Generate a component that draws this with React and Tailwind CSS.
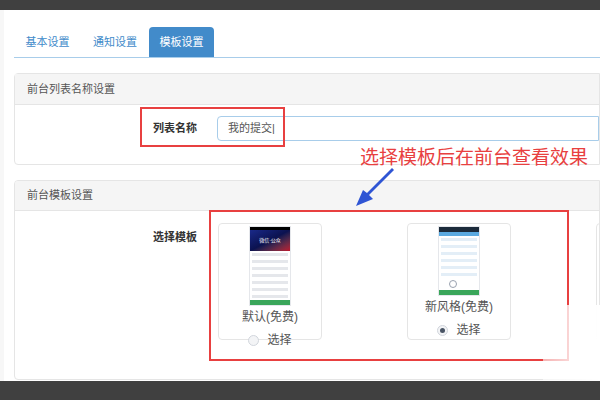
const font = { fontFamily: '"Liberation Sans", "Noto Sans CJK SC", sans-serif' };

function Phone({ variant }) {
  if (variant === "a") {
    return (
      <div className="w-[42px] h-[80px] bg-white border border-gray-200 flex flex-col">
        <div className="h-[3px] bg-black" />
        <div className="h-[22px] bg-gradient-to-br from-[#1a2a8a] via-[#0b1250] to-[#c0102a] flex items-center justify-center">
          <span className="text-[5px] text-white">微信·公众</span>
        </div>
        <div className="flex-1 flex flex-col gap-[4px] p-[2px]">
          {[0, 1, 2, 3, 4, 5, 6].map((i) => (
            <div key={i} className="h-[3px] bg-gray-200" />
          ))}
        </div>
        <div className="h-[5px] bg-[#3aa65a]" />
      </div>
    );
  }
  return (
    <div className="w-[42px] h-[80px] bg-white border border-gray-200 flex flex-col">
      <div className="h-[5px] bg-[#1b2a3a]" />
      <div className="h-[4px] bg-[#5aa9e0]" />
      <div className="flex-1 flex flex-col gap-[4px] p-[2px]">
        {[0, 1, 2, 3, 4, 5].map((i) => (
          <div key={i} className="h-[3px] bg-[#e3eef7]" />
        ))}
        <div className="w-[8px] h-[8px] rounded-full border border-gray-400 ml-[8px]" />
      </div>
      <div className="h-[5px] bg-[#3aa65a]" />
    </div>
  );
}

function Card({ name, variant, checked }) {
  return (
    <div className="shrink-0 w-[104px] h-[117px] border border-[#e5e5e5] rounded bg-white flex flex-col items-center pt-[2px]">
      <Phone variant={variant} />
      <div className="text-[12px] text-[#555] mt-[2px] whitespace-nowrap">{name}</div>
      <div className="flex items-center gap-[8px] mt-[5px] text-[12px] text-[#555]">
        <span className="w-[11px] h-[11px] rounded-full border border-gray-300 bg-gray-100 flex items-center justify-center">
          {checked && <span className="w-[5px] h-[5px] rounded-full bg-gray-600" />}
        </span>
        选择
      </div>
    </div>
  );
}

export default function App() {
  return (
    <div className="relative w-[600px] h-[400px] overflow-hidden bg-[#f7f7f7] flex flex-col" style={font}>
      <div className="h-[10px] bg-[#404040]" />
      <div className="flex-1 ml-[4px] bg-white pl-[10px] flex flex-col min-w-0">
        <div className="flex mt-[17px] h-[31px] border-b border-[#a8cdea] text-[11px]">
          <div className="w-[67px] flex items-center justify-center text-[#428bca]">基本设置</div>
          <div className="w-[68px] flex items-center justify-center text-[#428bca]">通知设置</div>
          <div className="w-[65px] flex items-center justify-center bg-[#428bca] text-white rounded-t">模板设置</div>
        </div>
        <div className="mt-[15px] border border-[#e5e5e5] rounded-l h-[92px]">
          <div className="h-[31px] bg-[#f5f5f5] border-b border-[#e5e5e5] flex items-center px-[12px] text-[11px] text-[#555]">前台列表名称设置</div>
          <div className="flex items-center pt-[11px]">
            <div className="w-[126px] shrink-0" />
            <div className="w-[76px] shrink-0 whitespace-nowrap font-bold text-[11px] text-[#333] pl-[12px]">列表名称</div>
            <div className="flex-1 h-[25px] border border-[#a8cdea] rounded-l flex items-center px-[10px] text-[11px] text-[#555]">我的提交|</div>
          </div>
        </div>
        <div className="mt-[15px] border border-[#e5e5e5] rounded-l h-[200px] overflow-hidden">
          <div className="h-[30px] bg-[#f5f5f5] border-b border-[#e5e5e5] flex items-center px-[12px] text-[11px] text-[#555]">前台模板设置</div>
          <div className="flex pt-[12px]">
            <div className="w-[126px] shrink-0" />
            <div className="w-[76px] shrink-0 whitespace-nowrap font-bold text-[11px] text-[#333] pl-[12px] pt-[6px]">选择模板</div>
            <div className="flex gap-[85px] ml-[1px] shrink-0">
              <Card name="默认(免费)" variant="a" />
              <Card name="新风格(免费)" variant="b" checked />
              <div className="shrink-0 w-[104px] h-[117px] border border-[#e5e5e5] rounded" />
            </div>
          </div>
        </div>
      </div>
      <div className="h-[19px] bg-[#404040]" />

      <div className="absolute left-[140px] top-[107px] w-[145px] h-[40px] border-2 border-[#e84040]" />
      <div className="absolute left-[209px] top-[210px] w-[360px] h-[151px] border-2 border-[#e84040]" />
      <div className="absolute left-[360px] top-[144px] text-[19px] text-[#e84040] whitespace-nowrap">选择模板后在前台查看效果</div>
      <svg className="absolute left-[352px] top-[168px]" width="46" height="42" viewBox="0 0 46 42">
        <path d="M42 2 L17 27 L21 31 L4 38 L11 22 L15 25 L40 0 Z" fill="#2f55d4" />
      </svg>
      <div className="absolute left-[543px] top-[305px] w-[57px] h-[76px] bg-gradient-to-l from-white to-white/60" />
    </div>
  );
}
